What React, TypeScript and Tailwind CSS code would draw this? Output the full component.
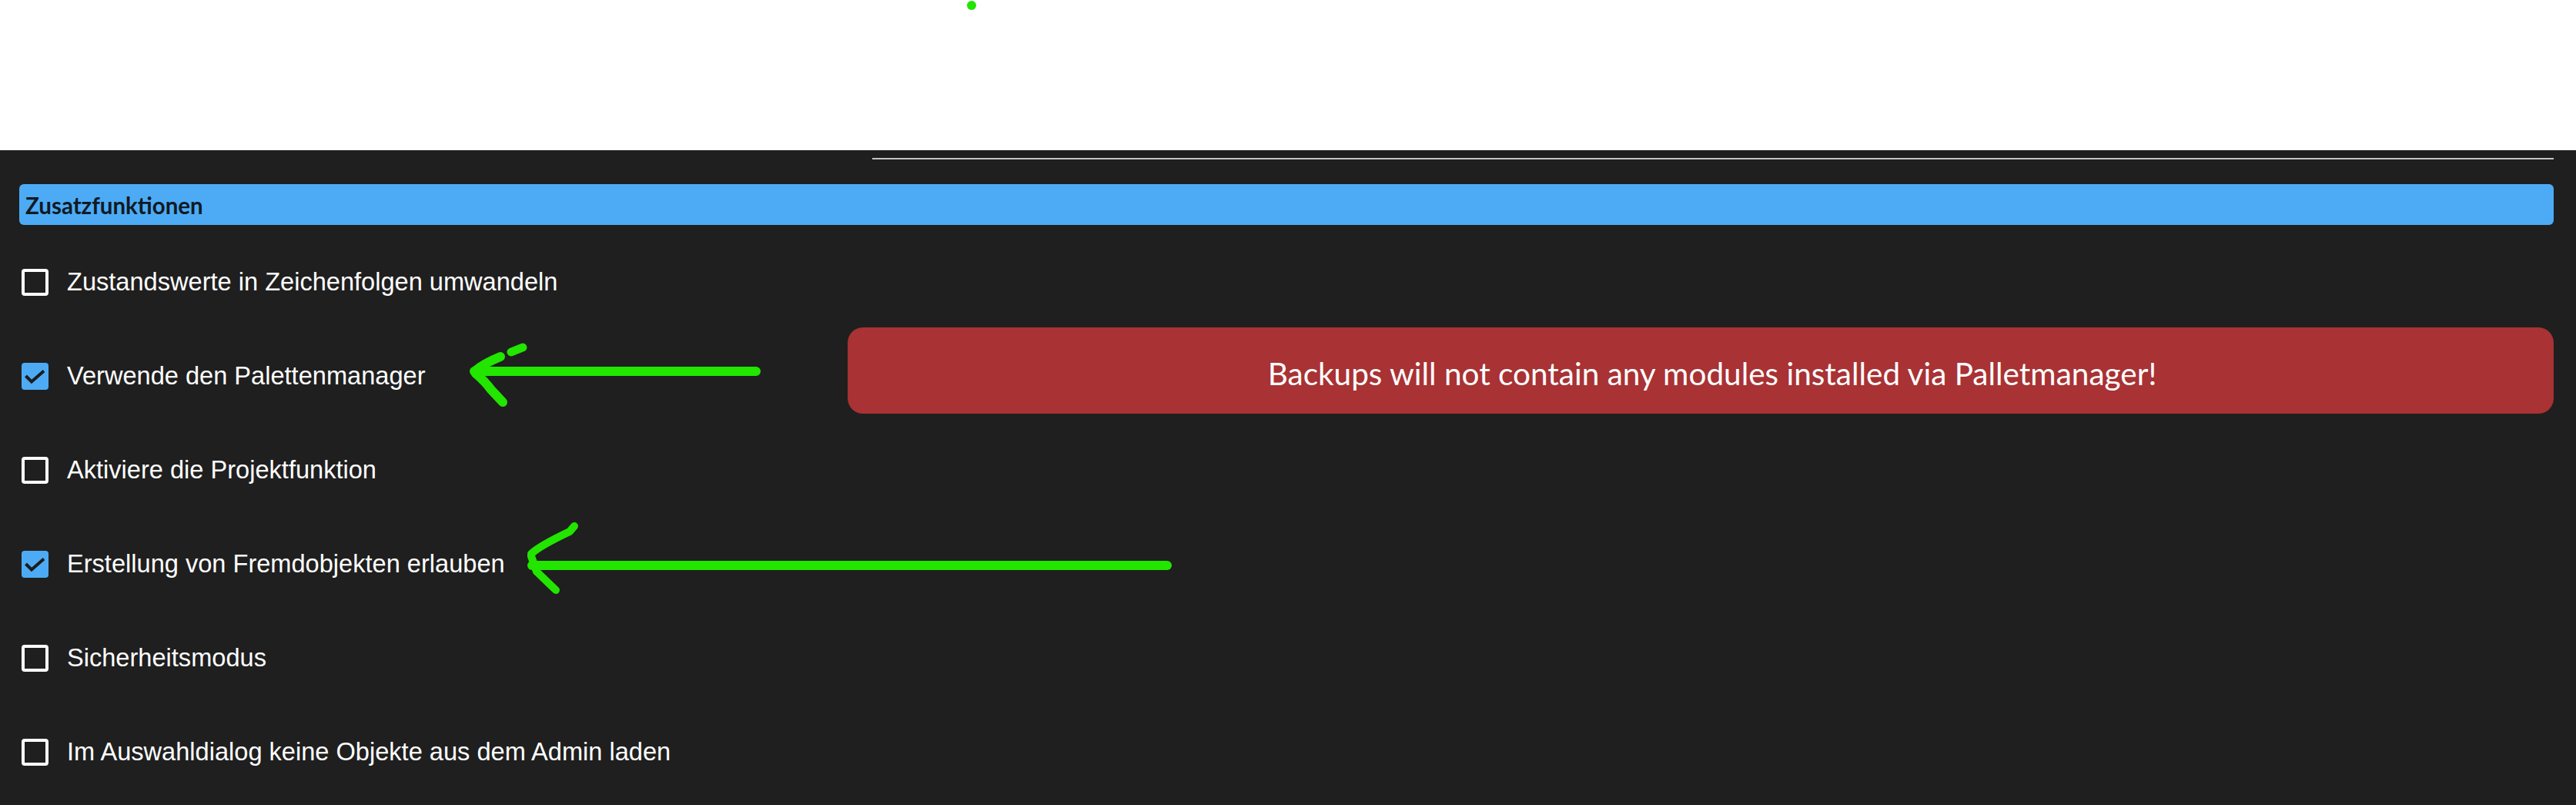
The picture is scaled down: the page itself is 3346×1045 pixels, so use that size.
import React from "react";

function Box({ checked }: { checked: boolean }) {
  if (checked) {
    return (
      <div className="w-[35px] h-[35px] shrink-0 rounded-[4px] bg-[#4dabf5]">
        <svg width="35" height="35" viewBox="0 0 35 35">
          <polyline points="5.5,17 13,24.5 29,10.5" fill="none" stroke="#1c1c1c" strokeWidth="4" strokeLinecap="butt" strokeLinejoin="miter" />
        </svg>
      </div>
    );
  }
  return <div className="w-[35px] h-[35px] shrink-0 rounded-[4px] border-[4px] border-white" />;
}

function Row({ label, checked, children }: { label: string; checked: boolean; children?: React.ReactNode }) {
  return (
    <div className="h-[122px] flex items-center pl-[28px] pr-[29px]">
      <div className="flex items-center w-[1073px] shrink-0">
        <Box checked={checked} />
        <span className="ml-[24px] text-white text-[32.6px] leading-none font-['Liberation_Sans',Arial,sans-serif]">{label}</span>
      </div>
      {children}
    </div>
  );
}

export default function App() {
  return (
    <div className="relative w-[3346px] h-[1045px] overflow-hidden bg-[#1f1f1f]">
      <div className="h-[195px] bg-white" />
      <div className="flex justify-end pt-[10px] pr-[29px]">
        <div className="w-[2184px] h-[2px] bg-[#c4c4c4]" />
      </div>
      <div className="mt-[32px] ml-[25px] mr-[29px] h-[53px] rounded-[6px] bg-[#4dabf5] flex items-center pl-[8px]">
        <span className="text-[#0f1a24] font-bold text-[29.5px] leading-none font-['Lato','Noto_Sans',sans-serif] pt-[3px]">Zusatzfunktionen</span>
      </div>
      <div className="mt-[13px] flex flex-col">
        <Row label="Zustandswerte in Zeichenfolgen umwandeln" checked={false} />
        <Row label="Verwende den Palettenmanager" checked={true}>
          <div className="flex-1 h-[112px] mb-[15px] rounded-[20px] bg-[#a83234] flex items-center justify-center pl-[30px] pt-[9px]">
            <span className="text-white text-[40.5px] leading-none font-['Lato','Noto_Sans',sans-serif]">
              Backups will not contain any modules installed via Palletmanager!
            </span>
          </div>
        </Row>
        <Row label="Aktiviere die Projektfunktion" checked={false} />
        <Row label="Erstellung von Fremdobjekten erlauben" checked={true} />
        <Row label="Sicherheitsmodus" checked={false} />
        <Row label="Im Auswahldialog keine Objekte aus dem Admin laden" checked={false} />
      </div>
      <svg className="absolute inset-0 pointer-events-none" width="3346" height="1045" viewBox="0 0 3346 1045">
        <circle cx="1262" cy="7" r="6" fill="#22e500" />
        <g fill="none" stroke="#22e500" strokeLinecap="round" strokeLinejoin="round">
          <path d="M616 482 L982 482" strokeWidth="12" />
          <path d="M618 481 Q628 472 650 463" strokeWidth="12" />
          <path d="M664 457 L679 451" strokeWidth="11" />
          <path d="M618 485 Q630 495 638 506 L653 522" strokeWidth="12" />
          <path d="M691 734 L1516 734" strokeWidth="12" />
          <path d="M690 719 Q700 709 740 690 L746 683" strokeWidth="10" />
          <path d="M690 722 L697 742 L722 766" strokeWidth="10" />
        </g>
      </svg>
    </div>
  );
}
